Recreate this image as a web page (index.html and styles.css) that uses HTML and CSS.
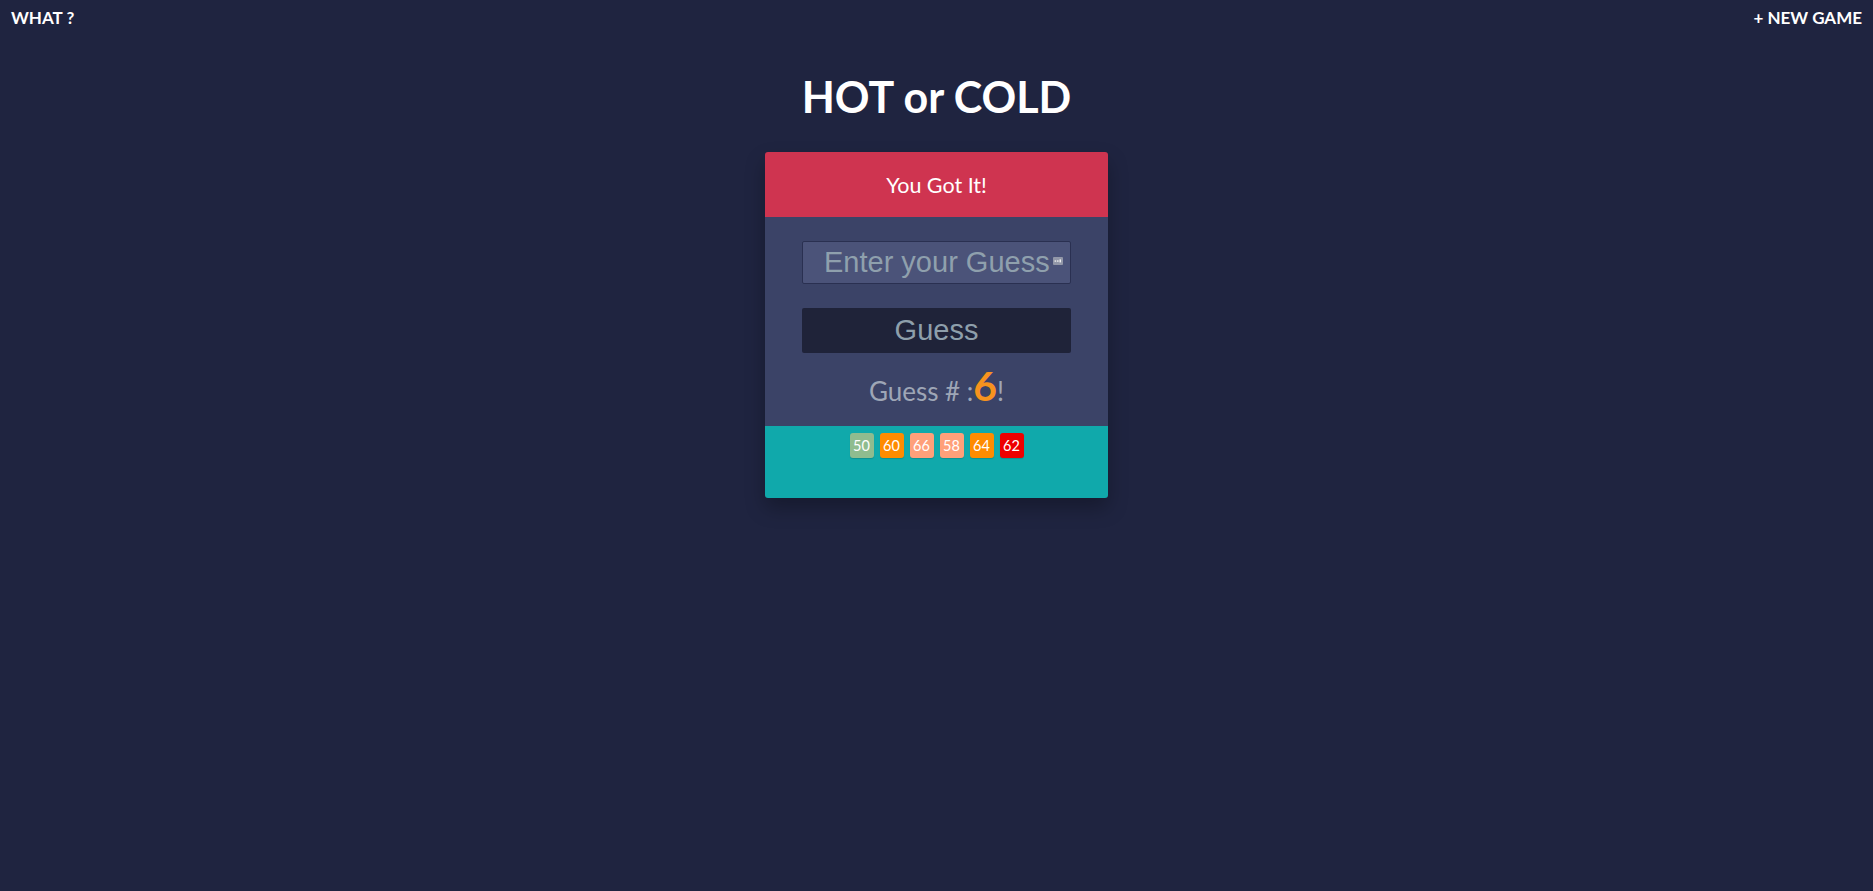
FILE: index.html
```html
<!DOCTYPE html>
<html lang="en">
<head>
<meta charset="utf-8">
<title>HOT or COLD</title>
<link rel="stylesheet" href="styles.css">
</head>
<body>
<nav class="topbar">
  <a class="toplink" href="#">WHAT ?</a>
  <a class="toplink" href="#">+ NEW GAME</a>
</nav>
<h1 class="title">HOT or COLD</h1>
<main class="card">
  <div class="feedback">You Got It!</div>
  <div class="body">
    <div class="field">
      <input class="guess-input" type="text" placeholder="Enter your Guess">
      <svg class="field-icon" width="10" height="8" viewBox="0 0 10 8"><rect width="10" height="8" rx="1" fill="#9297a8"/><rect x="1.6" y="3.4" width="1.6" height="1.3" fill="#f2f2f2"/><rect x="4" y="3.4" width="1.6" height="1.3" fill="#f2f2f2"/><rect x="6.5" y="2.4" width="1.5" height="3" fill="#f2f2f2"/></svg>
    </div>
    <button class="guess-btn" type="button">Guess</button>
    <p class="count">Guess # :<span class="num">6</span>!</p>
  </div>
  <ul class="history">
    <li class="badge b-cool">50</li>
    <li class="badge b-warm">60</li>
    <li class="badge b-salmon">66</li>
    <li class="badge b-salmon">58</li>
    <li class="badge b-warm">64</li>
    <li class="badge b-hot">62</li>
  </ul>
</main>
</body>
</html>
```

FILE: styles.css
```css
html, body {
  margin: 0;
  padding: 0;
}
body {
  background: #1f2440;
  font-family: Lato, "Liberation Sans", sans-serif;
  color: #fff;
  min-height: 891px;
}
.topbar {
  display: flex;
  justify-content: space-between;
  padding: 8px 11px 0 11px;
}
.toplink {
  color: #fff;
  text-decoration: none;
  font-weight: 700;
  font-size: 17px;
  line-height: 19px;
}
.title {
  margin: 44px 0 0 0;
  text-align: center;
  font-size: 43px;
  font-weight: 700;
  line-height: 52px;
}
.card {
  width: 343px;
  margin: 29px auto 0 auto;
  border-radius: 3px;
  overflow: hidden;
  box-shadow: 0 10px 20px rgba(0, 0, 0, 0.28);
}
.feedback {
  height: 65px;
  display: flex;
  align-items: center;
  justify-content: center;
  background: #cf3450;
  font-size: 21.5px;
  color: #fff;
}
.body {
  background: #3b4367;
  padding: 24px 36px 0 36px;
  display: flex;
  flex-direction: column;
  align-items: center;
}
.field {
  position: relative;
  width: 269px;
  height: 43px;
}
.guess-input {
  box-sizing: border-box;
  width: 269px;
  height: 43px;
  margin: 0;
  padding: 0 0 0 21px;
  background: #4b5379;
  border: 1px solid #2a3051;
  border-radius: 2px;
  font-family: "Liberation Sans", Arial, sans-serif;
  font-size: 29px;
  color: #dfe4ea;
  outline: none;
}
.guess-input::placeholder {
  color: #8fa0ad;
}
.field-icon {
  position: absolute;
  right: 8px;
  top: 16px;
}
.guess-btn {
  box-sizing: border-box;
  width: 269px;
  height: 45px;
  margin: 24px 0 0 0;
  padding: 0;
  border: none;
  border-radius: 2px;
  background: #1f2339;
  color: #8e9fab;
  font-family: "Liberation Sans", Arial, sans-serif;
  font-size: 29px;
  line-height: 45px;
}
.count {
  margin: 12px 0 0 0;
  padding-bottom: 20px;
  font-size: 26px;
  line-height: 1;
  color: #9ea6b6;
}
.num {
  font-size: 41px;
  font-weight: 700;
  line-height: 1;
  color: #f7931e;
}
.history {
  list-style: none;
  margin: 0;
  background: #10a9ab;
  height: 72px;
  box-sizing: border-box;
  padding: 7px 0 0 0;
  display: flex;
  justify-content: center;
  align-items: flex-start;
  gap: 6px;
}
.badge {
  min-width: 24px;
  box-sizing: border-box;
  padding: 3px 3px;
  line-height: 19px;
  font-size: 14.5px;
  text-align: center;
  color: #fff;
  border-radius: 3px;
  box-shadow: 0 1px 1px rgba(0, 0, 0, 0.15);
}
.b-cool { background: #8fbc8f; }
.b-warm { background: #ff8c00; }
.b-salmon { background: #ffa07a; }
.b-hot { background: #ee0000; }
```
